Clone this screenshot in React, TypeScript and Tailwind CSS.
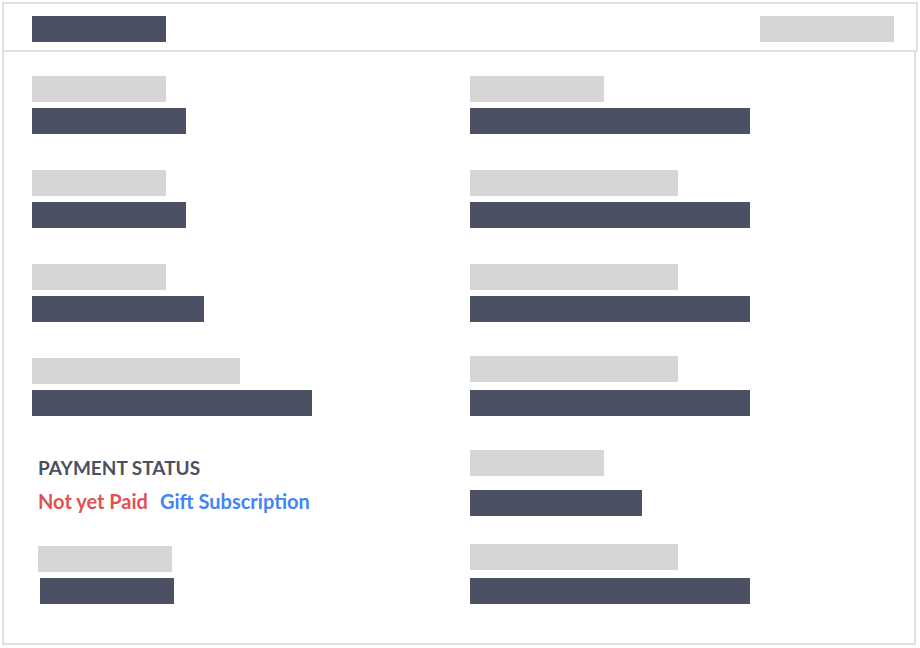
import * as React from "react";

const DARK = "bg-[#4b5162]";
const LIGHT = "bg-[#d6d6d6]";

function Bar({ className }: { className: string }) {
  return <div className={`h-[26px] ${className}`} />;
}

export default function App() {
  return (
    <div className="w-[920px] h-[648px] bg-white font-['Lato',sans-serif]">
      {/* header */}
      <div className="ml-[2px] mt-[2px] w-[916px] h-[50px] border-2 border-[#e0e0e0] flex items-start justify-between pl-[28px] pr-[22px] pt-[12px]">
        <Bar className={`w-[134px] ${DARK}`} />
        <Bar className={`w-[134px] ${LIGHT}`} />
      </div>

      {/* body */}
      <div className="ml-[2px] -mt-[2px] w-[914px] h-[595px] border-2 border-[#e0e0e0] flex pl-[28px] pt-[24px]">
        <div className="w-[438px] flex flex-col">
          <Bar className={`w-[134px] ${LIGHT}`} />
          <Bar className={`mt-[6px] w-[154px] ${DARK}`} />

          <Bar className={`mt-[36px] w-[134px] ${LIGHT}`} />
          <Bar className={`mt-[6px] w-[154px] ${DARK}`} />

          <Bar className={`mt-[36px] w-[134px] ${LIGHT}`} />
          <Bar className={`mt-[6px] w-[172px] ${DARK}`} />

          <Bar className={`mt-[36px] w-[208px] ${LIGHT}`} />
          <Bar className={`mt-[6px] w-[280px] ${DARK}`} />

          <div className="mt-[40px] ml-[6px] text-[19px] leading-[24px] font-bold text-[#4a5063]">
            PAYMENT STATUS
          </div>
          <div className="mt-[9px] ml-[6px] flex gap-[12px] text-[20px] leading-[24px] font-bold">
            <span className="text-[#e05252]">Not yet Paid</span>
            <span className="text-[#4285f4]">Gift Subscription</span>
          </div>

          <Bar className={`mt-[33px] ml-[6px] w-[134px] ${LIGHT}`} />
          <Bar className={`mt-[6px] ml-[8px] w-[134px] ${DARK}`} />
        </div>

        <div className="flex flex-col">
          <Bar className={`w-[134px] ${LIGHT}`} />
          <Bar className={`mt-[6px] w-[280px] ${DARK}`} />

          <Bar className={`mt-[36px] w-[208px] ${LIGHT}`} />
          <Bar className={`mt-[6px] w-[280px] ${DARK}`} />

          <Bar className={`mt-[36px] w-[208px] ${LIGHT}`} />
          <Bar className={`mt-[6px] w-[280px] ${DARK}`} />

          <Bar className={`mt-[34px] w-[208px] ${LIGHT}`} />
          <Bar className={`mt-[8px] w-[280px] ${DARK}`} />

          <Bar className={`mt-[34px] w-[134px] ${LIGHT}`} />
          <Bar className={`mt-[14px] w-[172px] ${DARK}`} />

          <Bar className={`mt-[28px] w-[208px] ${LIGHT}`} />
          <Bar className={`mt-[8px] w-[280px] ${DARK}`} />
        </div>
      </div>
    </div>
  );
}
